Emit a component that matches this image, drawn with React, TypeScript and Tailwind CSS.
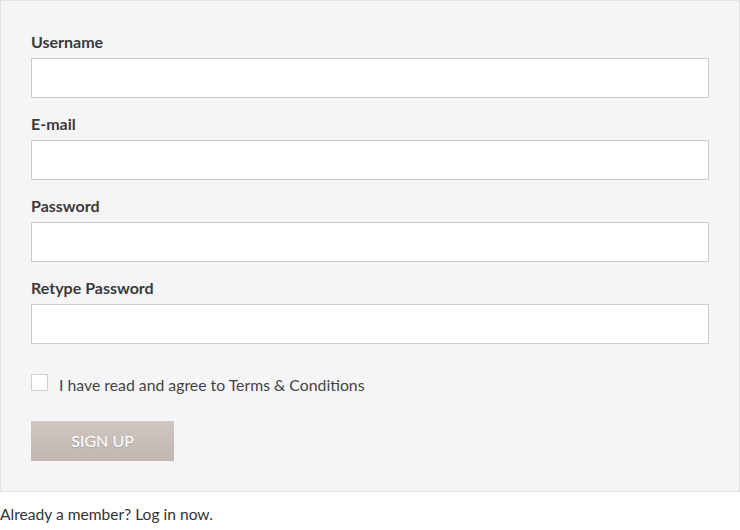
export default function App() {
  const fields = ['Username', 'E-mail', 'Password', 'Retype Password'];
  return (
    <div className="w-[740px] bg-white font-['Lato','Liberation_Sans',sans-serif]">
      <form className="flex flex-col border border-[#e3e3e5] bg-[#f5f5f7] px-[30px] pt-[31px] pb-[30px]">
        {fields.map((f, i) => (
          <div key={f} className={i > 0 ? 'mt-4 flex flex-col' : 'flex flex-col'}>
            <label className="mb-[6px] text-[16px] leading-5 font-bold text-[#3a3a3a]">{f}</label>
            <input
              type={f.includes('Password') ? 'password' : 'text'}
              className="h-10 w-full border border-[#cccccc] bg-white px-3 text-[15px] outline-none"
            />
          </div>
        ))}
        <div className="mt-[30px] flex items-start gap-[11px]">
          <span className="h-[17px] w-[17px] border border-[#cfcfcf] bg-white" />
          <span className="text-[15.8px] leading-[22px] text-[#444]">
            I have read and agree to Terms &amp; Conditions
          </span>
        </div>
        <button
          type="button"
          className="mt-[25px] h-10 w-[143px] bg-gradient-to-b from-[#cfc7c1] to-[#c1b7b0] text-[16px] text-white [text-shadow:0_1px_1px_rgba(0,0,0,0.15)]"
        >
          SIGN UP
        </button>
      </form>
      <p className="mt-[12px] text-[15.6px] leading-5 text-[#333]">Already a member? Log in now.</p>
    </div>
  );
}
